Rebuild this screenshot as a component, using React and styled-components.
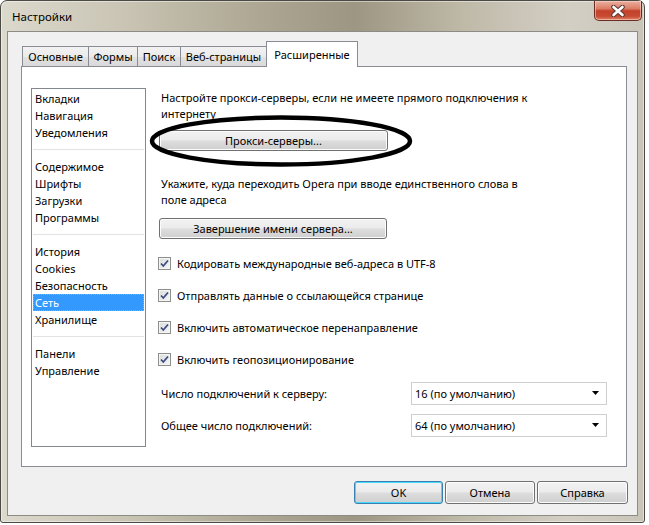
import React from "react";
import styled, { createGlobalStyle } from "styled-components";

const Global = createGlobalStyle`
  html, body { margin: 0; padding: 0; background: #ffffff; }
  body { font-family: "Noto Sans", "Open Sans", sans-serif; font-size: 11px; color: #000; }
  * { box-sizing: border-box; }
`;

const Window = styled.div`
  width: 645px;
  height: 523px;
  border: 1px solid #4b4a45;
  border-radius: 7px 7px 3px 3px;
  background: linear-gradient(90deg, #dcd9cd 0%, #c8c3b2 20%, #aaa490 42%, #9d9682 55%, #bfb9a8 72%, #d3cfc4 88%, #c9c5b9 100%);
  display: flex;
  flex-direction: column;
  padding: 0 6px 6px 6px;
  box-shadow: inset 0 0 0 1px rgba(255,255,255,0.45);
`;

const TitleBar = styled.div`
  height: 30px;
  display: flex;
  align-items: flex-start;
  flex-shrink: 0;
`;

const Title = styled.div`
  padding-left: 5px;
  line-height: 31px;
  font-size: 11.5px;
  color: #000;
`;

const CloseButton = styled.div`
  margin-left: auto;
  margin-right: -4px;
  width: 48px;
  height: 20px;
  border: 1px solid #6a2d22;
  border-top: none;
  border-radius: 0 0 5px 5px;
  background: linear-gradient(180deg, #eab1a0 0%, #dc7d66 40%, #c3412a 52%, #c84a32 80%, #de8468 100%);
  box-shadow: inset 0 0 0 1px rgba(255, 220, 210, 0.55);
  display: flex;
  align-items: center;
  justify-content: center;
`;

const Client = styled.div`
  flex: 1;
  background: #f0f0f0;
  border: 1px solid #8c8b86;
  display: flex;
  flex-direction: column;
  padding: 10px 10px 0 13px;
`;

const TabStrip = styled.div`
  display: flex;
  align-items: flex-end;
  height: 25px;
  padding-left: 1px;
  margin-bottom: -1px;
  position: relative;
  z-index: 1;
`;

const Tab = styled.div`
  width: ${(p) => p.$w}px;
  height: ${(p) => (p.$active ? 26 : 20)}px;
  margin-left: -1px;
  margin-bottom: ${(p) => (p.$active ? 0 : 1)}px;
  border: 1px solid #898c95;
  border-bottom: none;
  background: ${(p) => (p.$active ? "#ffffff" : "linear-gradient(180deg, #f2f2f2 0%, #ebebeb 50%, #e2e2e2 51%, #d9d9d9 100%)")};
  display: flex;
  align-items: ${(p) => (p.$active ? "flex-start" : "center")};
  padding-top: ${(p) => (p.$active ? 5 : 0)}px;
  justify-content: center;
  white-space: nowrap;
  &:first-child { margin-left: 0; }
`;

const Panel = styled.div`
  height: 401px;
  background: #ffffff;
  border: 1px solid #898c95;
  display: flex;
  padding: 21px 0 0 9px;
  gap: 12px;
`;

const ListBox = styled.div`
  width: 115px;
  height: 359px;
  border: 1px solid #828790;
  padding: 1px 1px 0 1px;
  display: flex;
  flex-direction: column;
`;

const ListItem = styled.div`
  height: 17px;
  line-height: 17px;
  padding-left: 2px;
  white-space: nowrap;
  background: ${(p) => (p.$selected ? "#3399ff" : "transparent")};
  color: ${(p) => (p.$selected ? "#ffffff" : "#000")};
  outline: ${(p) => (p.$selected ? "1px dotted #e0a040" : "none")};
  outline-offset: -1px;
`;

const Separator = styled.div`
  height: 17px;
  display: flex;
  align-items: center;
  &::after {
    content: "";
    flex: 1;
    height: 1px;
    background: #e3e3e3;
  }
`;

const Content = styled.div`
  flex: 1;
  display: flex;
  flex-direction: column;
  padding-top: 2px;
`;

const Para = styled.div`
  padding-left: 3px;
  line-height: 16px;
  white-space: nowrap;
  margin-top: ${(p) => p.$mt || 0}px;
`;

const ButtonWrap = styled.div`
  position: relative;
  margin-top: ${(p) => p.$mt || 0}px;
  margin-left: 1px;
  width: ${(p) => p.$w}px;
`;

const Button = styled.div`
  width: ${(p) => (p.$w ? p.$w + "px" : "100%")};
  height: ${(p) => p.$h || 21}px;
  border: 1px solid ${(p) => (p.$default ? "#3c7fb1" : "#707070")};
  border-radius: 3px;
  background: linear-gradient(180deg, #f2f2f2 0%, #ebebeb 48%, #dddddd 52%, #cfcfcf 100%);
  box-shadow: inset 0 0 0 1px ${(p) => (p.$default ? "#48d8fb" : "#fcfcfc")};
  display: flex;
  align-items: center;
  justify-content: center;
  white-space: nowrap;
`;

const Ellipse = styled.svg`
  position: absolute;
  left: -11px;
  top: -16px;
  pointer-events: none;
`;

const CheckRow = styled.div`
  display: flex;
  align-items: center;
  height: 16px;
  margin-top: 16px;
  gap: 6px;
  white-space: nowrap;
`;

const CheckBox = styled.div`
  width: 13px;
  height: 13px;
  border: 1px solid #8e8f8f;
  background: linear-gradient(135deg, #dcdcdc 0%, #f6f6f6 100%);
  box-shadow: inset 0 0 0 1px #f4f4f4;
  display: flex;
  align-items: center;
  justify-content: center;
`;

const SelectGrid = styled.div`
  display: grid;
  grid-template-columns: 253px 196px;
  row-gap: 9px;
  margin-top: 15px;
  align-items: center;
`;

const Label = styled.div`
  padding-left: 3px;
  white-space: nowrap;
`;

const Select = styled.div`
  height: 23px;
  border: 1px solid #cfcfcf;
  background: #ffffff;
  display: flex;
  align-items: center;
  padding: 0 6px 0 3px;
  white-space: nowrap;
  justify-content: space-between;
`;

const ButtonRow = styled.div`
  display: flex;
  justify-content: flex-end;
  gap: 2px;
  margin-top: 14px;
  margin-right: -1px;
`;

const CheckMark = () => (
  <svg width="11" height="11" viewBox="0 0 11 11">
    <path d="M2 5.5 L4.3 8 L9 2.5" fill="none" stroke="#3a4d7e" strokeWidth="1.8" />
  </svg>
);

const Arrow = () => (
  <svg width="8" height="5" viewBox="0 0 8 5">
    <path d="M0 0 H7 L3.5 4 Z" fill="#000" />
  </svg>
);

const CloseX = () => (
  <svg width="16" height="12" viewBox="0 0 16 12">
    <path d="M3.5 2 L12.5 10 M12.5 2 L3.5 10" stroke="#5a3a34" strokeWidth="4.6" strokeLinecap="round" />
    <path d="M3.5 2 L12.5 10 M12.5 2 L3.5 10" stroke="#ffffff" strokeWidth="2.6" strokeLinecap="round" />
  </svg>
);

const tabs = [
  { t: "Основные", w: 67 },
  { t: "Формы", w: 50 },
  { t: "Поиск", w: 44 },
  { t: "Веб-страницы", w: 87 },
  { t: "Расширенные", w: 92, active: true },
];

const groups = [
  ["Вкладки", "Навигация", "Уведомления"],
  ["Содержимое", "Шрифты", "Загрузки", "Программы"],
  ["История", "Cookies", "Безопасность", "Сеть", "Хранилище"],
  ["Панели", "Управление"],
];

const checks = [
  "Кодировать международные веб-адреса в UTF-8",
  "Отправлять данные о ссылающейся странице",
  "Включить автоматическое перенаправление",
  "Включить геопозиционирование",
];

export default function App() {
  return (
    <>
      <Global />
      <Window>
        <TitleBar>
          <Title>Настройки</Title>
          <CloseButton>
            <CloseX />
          </CloseButton>
        </TitleBar>
        <Client>
          <TabStrip>
            {tabs.map((t) => (
              <Tab key={t.t} $w={t.w} $active={t.active}>
                {t.t}
              </Tab>
            ))}
          </TabStrip>
          <Panel>
            <ListBox>
              {groups.map((g, gi) => (
                <React.Fragment key={gi}>
                  {gi > 0 && <Separator />}
                  {g.map((item) => (
                    <ListItem key={item} $selected={item === "Сеть"}>
                      {item}
                    </ListItem>
                  ))}
                </React.Fragment>
              ))}
            </ListBox>
            <Content>
              <Para>
                Настройте прокси-серверы, если не имеете прямого подключения к
                <br />
                интернету
              </Para>
              <ButtonWrap $mt={8} $w={229}>
                <Button>Прокси-серверы...</Button>
                <Ellipse width="266" height="54" viewBox="0 0 266 54">
                  <ellipse cx="133" cy="27" rx="129" ry="23.5" fill="none" stroke="#000" strokeWidth="4.5" />
                </Ellipse>
              </ButtonWrap>
              <Para $mt={25}>
                Укажите, куда переходить Opera при вводе единственного слова в
                <br />
                поле адреса
              </Para>
              <ButtonWrap $mt={10} $w={228}>
                <Button>Завершение имени сервера...</Button>
              </ButtonWrap>
              {checks.map((c) => (
                <CheckRow key={c}>
                  <CheckBox>
                    <CheckMark />
                  </CheckBox>
                  {c}
                </CheckRow>
              ))}
              <SelectGrid>
                <Label>Число подключений к серверу:</Label>
                <Select>
                  16 (по умолчанию)
                  <Arrow />
                </Select>
                <Label>Общее число подключений:</Label>
                <Select>
                  64 (по умолчанию)
                  <Arrow />
                </Select>
              </SelectGrid>
            </Content>
          </Panel>
          <ButtonRow>
            <Button $w={89} $h={23} $default>OK</Button>
            <Button $w={90} $h={23}>Отмена</Button>
            <Button $w={91} $h={23}>Справка</Button>
          </ButtonRow>
        </Client>
      </Window>
    </>
  );
}
